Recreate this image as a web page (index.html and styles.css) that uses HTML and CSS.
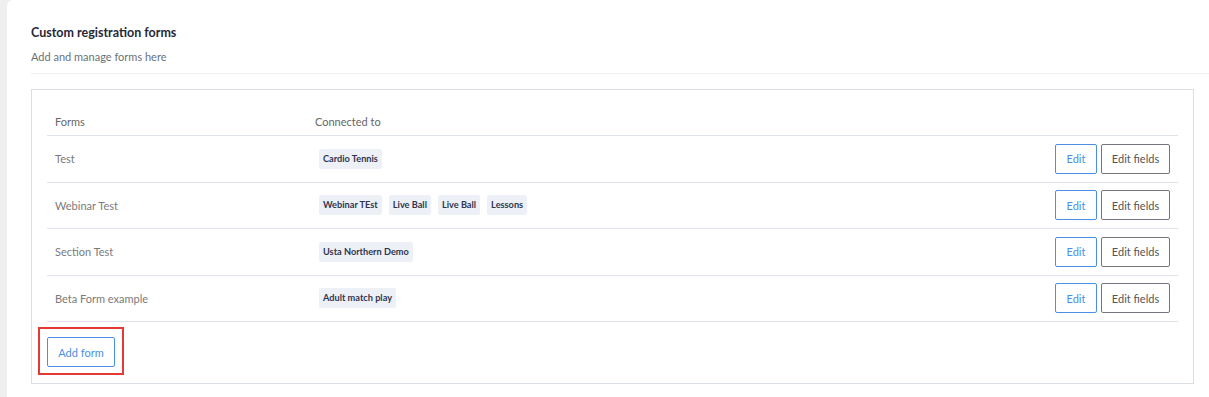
FILE: index.html
```html
<!DOCTYPE html>
<html lang="en">
  <head>
    <meta charset="UTF-8" />
    <meta name="viewport" content="width=device-width, initial-scale=1.0" />
    <title>Custom registration forms</title>
    <link rel="stylesheet" href="styles.css">
  </head>
  <body>
    <div class="panel">
      <div class="panel-head">
        <h2 class="title">Custom registration forms</h2>
        <p class="subtitle">Add and manage forms here</p>
      </div>
      <div class="card">
        <div class="row row-head">
          <div class="cell-name">Forms</div>
          <div class="cell-conn">Connected to</div>
        </div>
        <div class="row">
          <div class="cell-name">Test</div>
          <div class="cell-conn">
            <span class="tag">Cardio Tennis</span>
          </div>
          <div class="actions">
            <button class="btn btn-blue">Edit</button>
            <button class="btn btn-gray">Edit fields</button>
          </div>
        </div>
        <div class="row">
          <div class="cell-name">Webinar Test</div>
          <div class="cell-conn">
            <span class="tag">Webinar TEst</span>
            <span class="tag">Live Ball</span>
            <span class="tag">Live Ball</span>
            <span class="tag">Lessons</span>
          </div>
          <div class="actions">
            <button class="btn btn-blue">Edit</button>
            <button class="btn btn-gray">Edit fields</button>
          </div>
        </div>
        <div class="row">
          <div class="cell-name">Section Test</div>
          <div class="cell-conn">
            <span class="tag">Usta Northern Demo</span>
          </div>
          <div class="actions">
            <button class="btn btn-blue">Edit</button>
            <button class="btn btn-gray">Edit fields</button>
          </div>
        </div>
        <div class="row">
          <div class="cell-name">Beta Form example</div>
          <div class="cell-conn">
            <span class="tag">Adult match play</span>
          </div>
          <div class="actions">
            <button class="btn btn-blue">Edit</button>
            <button class="btn btn-gray">Edit fields</button>
          </div>
        </div>
        <div class="add-row">
          <div class="highlight">
            <button class="btn btn-blue btn-add">Add form</button>
          </div>
        </div>
      </div>
    </div>
  </body>
</html>
```

FILE: styles.css
```css
html {
  font-family: "Lato", "Open Sans", sans-serif;
}
body {
  margin: 0;
  padding: 0;
  background: #efefef;
}
.panel {
  margin-left: 7px;
  background: #ffffff;
  border-radius: 6px 0 0 0;
  height: 397px;
  padding-top: 26px;
  box-sizing: border-box;
}
.panel-head {
  margin-left: 24px;
  padding-bottom: 9px;
  border-bottom: 1px solid #efefef;
}
.title {
  margin: 0;
  font-size: 12.5px;
  font-weight: 700;
  color: #262838;
  line-height: 14px;
}
.subtitle {
  margin: 10px 0 0 0;
  font-size: 11px;
  color: #6b7178;
  line-height: 14px;
}
.card {
  margin: 15px 15px 0 24px;
  border: 1px solid #d9dfe5;
  padding: 0 15px 8px 15px;
}
.row {
  display: flex;
  align-items: center;
  height: 45.5px;
  border-bottom: 1px solid #dde3e9;
  font-size: 11px;
  color: #7a7a7a;
}
.row-head {
  height: 46px;
  padding-top: 17px;
  box-sizing: border-box;
  color: #666666;
}
.cell-name {
  width: 260px;
  padding-left: 8px;
}
.cell-conn {
  flex: 1;
  display: flex;
  gap: 7px;
  padding-left: 4px;
}
.row-head .cell-conn {
  padding-left: 0;
}
.tag {
  background: #edf0f6;
  color: #2f3650;
  font-size: 9.2px;
  font-weight: 700;
  padding: 0 4px;
  height: 20px;
  line-height: 20px;
  border-radius: 2px;
}
.actions {
  display: flex;
  gap: 4px;
  padding-right: 8px;
}
.btn {
  font-family: "Lato", "Open Sans", sans-serif;
  font-size: 11px;
  height: 30px;
  background: #ffffff;
  border-radius: 2px;
  cursor: pointer;
  padding: 0;
}
.btn-blue {
  color: #4a90e2;
  border: 1px solid #4a90e2;
  width: 42px;
}
.btn-gray {
  color: #555555;
  border: 1px solid #75757d;
  width: 69px;
}
.add-row {
  padding-top: 5px;
}
.highlight {
  display: inline-block;
  margin-left: -9px;
  border: 2px solid #e53935;
  padding: 8px 7px 6px 7px;
}
.btn-add {
  width: 68px;
  display: block;
}
```
